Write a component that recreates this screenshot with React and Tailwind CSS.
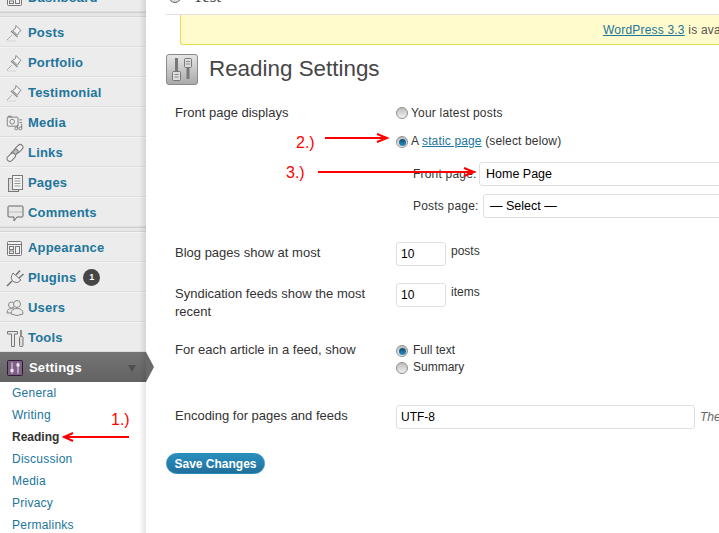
const SANS = "font-['Liberation_Sans',Arial,sans-serif]";

const PinIcon = () => (
  <svg width="20" height="20" viewBox="0 0 20 20" fill="none">
    <path d="M2 17 L7 12" stroke="#aaa" strokeWidth="1" />
    <path d="M11 2.5 L16 7.5 L14.5 8.5 L12.5 12 L7.5 7.5 L10.5 5.5 Z" fill="#f6f6f6" stroke="#888" strokeWidth="1" strokeLinejoin="round" />
    <path d="M6 8 L12.5 14" stroke="#888" strokeWidth="1.2" />
    <path d="M2 18 H11" stroke="#d4d4d4" strokeWidth="1" />
  </svg>
);

const MediaIcon = () => (
  <svg width="18" height="18" viewBox="0 0 20 20" fill="none" stroke="#777" strokeWidth="1">
    <rect x="2.5" y="3.5" width="12" height="10" rx="1" fill="#eee" />
    <path d="M3.5 3.5 V2.5 H7 V3.5" />
    <circle cx="8" cy="8.5" r="2.6" />
    <path d="M16 6.5 H19 M16 9.5 H19" />
    <circle cx="12.5" cy="16" r="1.6" />
    <circle cx="17" cy="16" r="1.6" />
    <path d="M14 16 V12 M18.5 16 V11" />
  </svg>
);

const LinkIcon = () => (
  <svg width="20" height="20" viewBox="0 0 20 20" fill="none" stroke="#777" strokeWidth="1">
    <rect x="9" y="3" width="9.5" height="5.5" rx="2.7" transform="rotate(-45 13.7 5.7)" fill="#f0f0f0" />
    <rect x="5.5" y="7.5" width="8" height="4.5" rx="2.2" transform="rotate(-45 9.5 9.7)" fill="#bdbdbd" />
    <rect x="1.5" y="11.5" width="9.5" height="5.5" rx="2.7" transform="rotate(-45 6.2 14.2)" fill="#f0f0f0" />
  </svg>
);

const PagesIcon = () => (
  <svg width="20" height="20" viewBox="0 0 20 20" fill="none" stroke="#777" strokeWidth="1">
    <rect x="3.5" y="5.5" width="10" height="13" fill="#ddd" />
    <rect x="7.5" y="2.5" width="10" height="14" fill="#f4f4f4" />
    <path d="M9.5 5.5 H15.5 M9.5 8 H15.5 M9.5 10.5 H15.5 M9.5 13 H15.5" stroke="#999" />
  </svg>
);

const CommentIcon = () => (
  <svg width="20" height="20" viewBox="0 0 20 20" fill="none">
    <path d="M4 3 H17 Q18 3 18 4 V13 Q18 14 17 14 H12 L9 18 V14 H4 Q3 14 3 13 V4 Q3 3 4 3 Z" fill="#e8e8e8" stroke="#666" />
    <path d="M4 9 H17" stroke="#bbb" />
  </svg>
);

const AppearanceIcon = () => (
  <svg width="20" height="20" viewBox="0 0 20 20" fill="none" stroke="#777" strokeWidth="1">
    <rect x="2.5" y="3.5" width="14" height="14" rx="1" fill="#f2f2f2" />
    <path d="M2.5 6.5 H16.5" />
    <rect x="4.5" y="8.5" width="4" height="3" />
    <rect x="4.5" y="13" width="4" height="2.5" />
    <rect x="10.5" y="8.5" width="4" height="7" />
  </svg>
);

const PluginIcon = () => (
  <svg width="20" height="20" viewBox="0 0 20 20" fill="none" stroke="#777" strokeWidth="1">
    <path d="M8 5 L16 12 Q13 16 9 14 Q4 11 8 5 Z" fill="#eeeeee" />
    <path d="M11 7 L15 2.5 M14 10 L18.5 6" strokeWidth="1.6" />
    <path d="M7 13 L2 18" strokeWidth="1.6" />
  </svg>
);

const UsersIcon = () => (
  <svg width="20" height="20" viewBox="0 0 20 20" fill="#ececec" stroke="#888" strokeWidth="1">
    <circle cx="6.5" cy="7" r="3" />
    <path d="M2 15 Q2 10.5 6.5 10.5 Q9 10.5 10 12 V15 Z" />
    <circle cx="12" cy="6" r="3.5" />
    <path d="M6 16 Q6 10.5 12 10.5 Q18 10.5 18 16 Q12 19 6 16 Z" />
  </svg>
);

const ToolsIcon = () => (
  <svg width="20" height="20" viewBox="0 0 20 20" fill="none" stroke="#777" strokeWidth="1">
    <path d="M2.5 3.5 H12.5 V6 H9.5 V18.5 H6.5 V6 H2.5 Z" fill="#e8e8e8" />
    <path d="M16 2 V8" strokeWidth="1.6" />
    <rect x="14.5" y="8.5" width="3.5" height="10" rx="1" fill="#ddd" />
  </svg>
);

const SettingsIcon = () => (
  <svg width="18" height="18" viewBox="0 0 18 18" fill="none">
    <rect x="1.5" y="1.5" width="15" height="15" rx="1" fill="#7d5f83" stroke="#2f1c33" />
    <path d="M6 3.5 V14.5 M12 3.5 V14.5" stroke="#f0e8f0" strokeWidth="1" />
    <rect x="4.5" y="10" width="3" height="3" fill="#f0e8f0" />
    <rect x="10.5" y="4.5" width="3" height="3" fill="#f0e8f0" />
  </svg>
);

// big sliders icon next to the page title
const TitleIcon = () => (
  <svg width="32" height="31" viewBox="0 0 32 31" fill="none">
    <defs>
      <linearGradient id="ti" x1="0" y1="0" x2="0" y2="1">
        <stop offset="0" stopColor="#e6e6e6" />
        <stop offset="1" stopColor="#a9a9a9" />
      </linearGradient>
    </defs>
    <rect x="0.5" y="0.5" width="31" height="30" rx="2.5" fill="url(#ti)" stroke="#8a8a8a" />
    <path d="M10.5 4 V25 M22 4 V25" stroke="#777" strokeWidth="3" />
    <rect x="6.5" y="17.5" width="8" height="9" rx="1" fill="#ddd" stroke="#777" />
    <path d="M8.5 20.5 H12.5 M8.5 23 H12.5" stroke="#888" />
    <rect x="18.5" y="4.5" width="7" height="9" rx="1" fill="#ddd" stroke="#777" />
    <path d="M20 7.5 H24 M20 10 H24" stroke="#888" />
  </svg>
);

const Radio = ({ checked }) => (
  <span className="flex h-[12px] w-[12px] shrink-0 items-center justify-center rounded-full border border-[#8f8f8f] bg-gradient-to-b from-[#bdbdbd] to-[#f1f1f1]">
    {checked && (
      <span className="h-[7px] w-[7px] rounded-full bg-gradient-to-b from-[#0b4f78] to-[#2f8fc4]" />
    )}
  </span>
);

const menuTop = [
  { name: "Posts", icon: <PinIcon /> },
  { name: "Portfolio", icon: <PinIcon /> },
  { name: "Testimonial", icon: <PinIcon /> },
  { name: "Media", icon: <MediaIcon /> },
  { name: "Links", icon: <LinkIcon /> },
  { name: "Pages", icon: <PagesIcon /> },
  { name: "Comments", icon: <CommentIcon /> },
];

const menuBottom = [
  { name: "Appearance", icon: <AppearanceIcon /> },
  { name: "Plugins", icon: <PluginIcon />, badge: "1" },
  { name: "Users", icon: <UsersIcon /> },
  { name: "Tools", icon: <ToolsIcon /> },
];

const subMenu = ["General", "Writing", "Reading", "Discussion", "Media", "Privacy", "Permalinks"];

const MenuRow = ({ item }) => (
  <div className="flex h-[30px] items-center border-t border-b border-t-[#f4f4f4] border-b-[#dedede] bg-[#ececec] pl-[5px] pt-[1px]">
    <span className="flex w-[23px] shrink-0">{item.icon}</span>
    <span className="text-[13px] font-bold tracking-[0.2px] text-[#21759b]">{item.name}</span>
    {item.badge && (
      <span className="ml-[7px] flex h-[17px] w-[17px] items-center justify-center rounded-full bg-[#464646] text-[9px] font-bold text-white">
        {item.badge}
      </span>
    )}
  </div>
);

const GroupGap = () => (
  <div className="h-[5px] border-t border-b border-t-[#cfcfcf] border-b-[#d5d5d5] bg-[#e6e6e6]" />
);

const Sidebar = () => (
  <aside className="relative -mt-[18px] w-[146px] shrink-0 bg-white">
    <MenuRow item={{ name: "Dashboard", icon: <AppearanceIcon /> }} />
    <GroupGap />
    {menuTop.map((item) => (
      <MenuRow key={item.name} item={item} />
    ))}
    <GroupGap />
    {menuBottom.map((item) => (
      <MenuRow key={item.name} item={item} />
    ))}

    {/* Current section */}
    <div className="relative flex h-[30px] items-center bg-gradient-to-b from-[#757575] to-[#626262] pl-[6px] pt-[1px]">
      <span className="flex w-[23px] shrink-0"><SettingsIcon /></span>
      <span className="text-[13px] font-bold tracking-[0.2px] text-white">Settings</span>
      <span className="absolute left-[128px] top-[13px] h-0 w-0 border-x-[4px] border-t-[7px] border-x-transparent border-t-[#4f4f4f]" />
      <span className="absolute left-[146px] top-0 h-0 w-0 border-y-[15px] border-l-[8px] border-y-transparent border-l-[#6a6a6a]" />
    </div>

    <ul>
      {subMenu.map((name) => (
        <li
          key={name}
          className={`flex h-[22px] items-center pl-[12px] text-[12px] ${name === "Reading" ? "font-bold text-[#333]" : "tracking-[0.25px] text-[#21759b]"}`}
        >
          {name}
        </li>
      ))}
    </ul>

    <div className="pointer-events-none absolute inset-y-0 right-0 w-[7px] bg-gradient-to-r from-transparent to-black/10" />
  </aside>
);

const Row = ({ label, className = "", children }) => (
  <div className={`grid grid-cols-[221px_1fr] pl-[9px] ${className}`}>
    <div className="text-[13px] leading-[18px] text-[#333]">{label}</div>
    <div>{children}</div>
  </div>
);

const boxClass = "flex h-[24px] items-center rounded-[3px] border border-[#dfdfdf] bg-white text-black";

const Main = () => (
  <main className="-mt-[10px] ml-[20px] min-w-0 flex-1">
    <div className="flex h-[25px] items-start border-b border-[#e0e0e0] pl-[2px]">
      <svg className="mt-[-1px]" width="14" height="15" viewBox="0 0 14 15" fill="#ddd" stroke="#666">
        <circle cx="7" cy="7.5" r="6" />
        <path d="M7 4 V11" />
      </svg>
      <span className="ml-[11px] font-['Liberation_Serif',serif] text-[17px] leading-[14px] text-[#464646]">Test</span>
    </div>

    <div className="ml-[14px] flex h-[30px] items-center overflow-hidden whitespace-nowrap rounded-bl-[3px] border-b border-l border-[#e6db55] bg-[#fffbcc] pl-[422px] text-[12px] tracking-[0.2px] text-[#555]">
      <span className="text-[#21759b] underline">WordPress 3.3</span>
      <span>&nbsp;is available! Please update now.</span>
    </div>

    <div className="mt-[9px] flex h-[31px] items-center">
      <TitleIcon />
      <h2 className="-mt-[2px] ml-[11px] text-[22.4px] font-normal text-[#464646]">Reading Settings</h2>
    </div>

    <Row label="Front page displays" className="mt-[19px]">
      <div className="flex h-[18px] items-center text-[12px] tracking-[0.2px] text-[#333]">
        <Radio />
        <span className="ml-[3px]">Your latest posts</span>
      </div>
      <div className="mt-[11px] flex h-[18px] items-center text-[12px] tracking-[0.15px] text-[#333]">
        <Radio checked />
        <span className="ml-[3px] -mt-[2px]">
          A <span className="text-[#21759b] underline">static page</span> (select below)
        </span>
      </div>
      <div className="mt-[11px] flex items-center pl-[17px] text-[12px] tracking-[0.2px] text-[#333]">
        <span className="w-[66px] shrink-0">Front page:</span>
        <div className={`${boxClass} w-[300px] px-[6px] text-[12.5px] tracking-normal`}>Home Page</div>
      </div>
      <div className="mt-[8px] flex items-center pl-[17px] text-[12px] tracking-[0.2px] text-[#333]">
        <span className="w-[70px] shrink-0">Posts page:</span>
        <div className={`${boxClass} w-[300px] px-[6px] text-[12.5px] tracking-normal`}>— Select —</div>
      </div>
    </Row>

    <Row label={<div className="pt-[2px]">Blog pages show at most</div>} className="mt-[24px]">
      <div className="flex items-start text-[12px] text-[#333]">
        <div className={`${boxClass} w-[50px] px-[4px] text-[12px]`}>10</div>
        <span className="ml-[5px]">posts</span>
      </div>
    </Row>

    <Row label={<div className="w-[200px] pt-[2px]">Syndication feeds show the most recent</div>} className="mt-[17px]">
      <div className="flex items-start text-[12px] text-[#333]">
        <div className={`${boxClass} w-[50px] px-[4px] text-[12px]`}>10</div>
        <span className="ml-[5px]">items</span>
      </div>
    </Row>

    <Row label="For each article in a feed, show" className="mt-[20px]">
      <div className="mt-[1px] flex h-[18px] items-center text-[12px] text-[#333]">
        <Radio checked />
        <span className="-mt-[2px] ml-[5px]">Full text</span>
      </div>
      <div className="flex h-[16px] items-center text-[12px] text-[#333]">
        <Radio />
        <span className="-mt-[2px] ml-[5px]">Summary</span>
      </div>
    </Row>

    <Row label={<div className="pt-[2px]">Encoding for pages and feeds</div>} className="mt-[29px]">
      <div className="flex items-center whitespace-nowrap">
        <div className={`${boxClass} w-[299px] px-[4px] text-[12px]`}>UTF-8</div>
        <span className="ml-[5px] text-[12px] italic text-[#666]">The encoding</span>
      </div>
    </Row>

    <button className="mt-[24px] flex h-[21px] w-[99px] items-center justify-center rounded-full border border-[#298cba] bg-gradient-to-b from-[#2a8fbe] to-[#21709a] text-[12px] font-bold text-white">
      Save Changes
    </button>
  </main>
);

// red hand-drawn annotations laid over the screenshot
const Annotations = () => (
  <>
    <svg className="pointer-events-none absolute inset-0" width="719" height="533" fill="none" stroke="#f00" strokeWidth="2">
      <path d="M129 437 H64 M73 433 L64 437 L73 441" />
      <path d="M325 138 H387 M377 134 L387 138 L377 142" />
      <path d="M318 172 H474 M464 168 L474 172 L464 176" />
    </svg>
    <span className="absolute left-[111px] top-[408px] text-[16px] text-[#f00]">1.)</span>
    <span className="absolute left-[296px] top-[131px] text-[16px] text-[#f00]">2.)</span>
    <span className="absolute left-[286px] top-[161px] text-[16px] text-[#f00]">3.)</span>
  </>
);

export default function App() {
  return (
    <div className={`relative flex h-[533px] w-[719px] overflow-hidden bg-white ${SANS}`}>
      <Sidebar />
      <Main />
      <Annotations />
    </div>
  );
}
